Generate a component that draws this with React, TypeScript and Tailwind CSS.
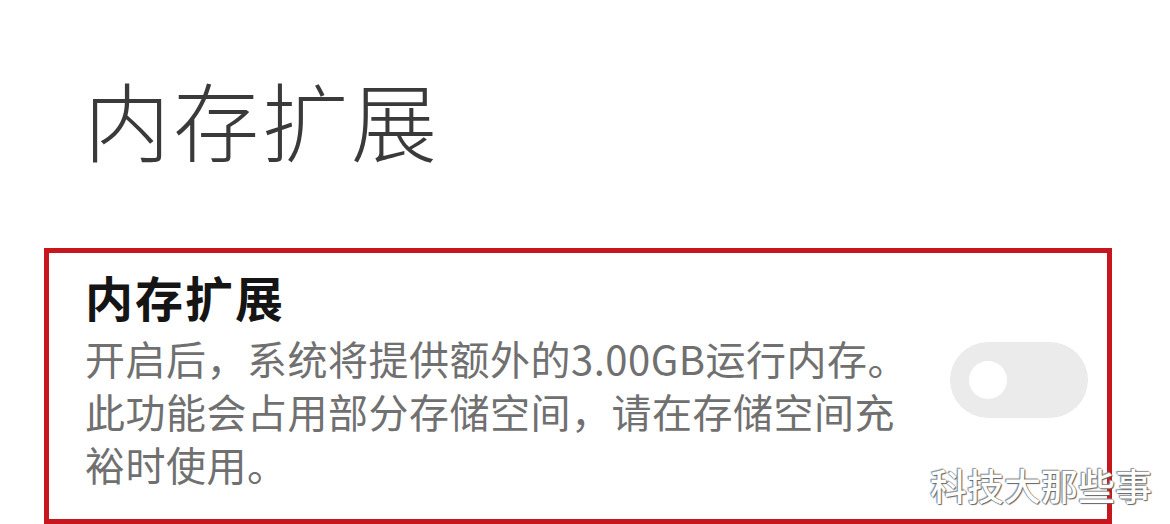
import { useState } from 'react';

const FONT = "font-['Noto_Sans_CJK_SC','Noto_Sans',sans-serif]";

function Toggle({ on, onChange }: { on: boolean; onChange: (v: boolean) => void }) {
  return (
    <button
      onClick={() => onChange(!on)}
      className="w-[138px] h-[76px] rounded-full bg-[#ebebeb] flex items-center px-[19px] shrink-0"
    >
      <span className={on ? 'ml-auto w-[38px] h-[38px] rounded-full bg-white' : 'w-[38px] h-[38px] rounded-full bg-white'} />
    </button>
  );
}

export default function App() {
  const [enabled, setEnabled] = useState(false);

  return (
    <div className={`relative w-[1170px] h-[524px] bg-white overflow-hidden ${FONT}`}>
      {/* Page heading */}
      <h1 className="pt-[76px] pl-[84px] text-[86px] leading-none font-light tracking-[3px] text-[#3a3a3a]">
        内存扩展
      </h1>

      {/* Setting card */}
      <div className="mt-[86px] ml-[44px] w-[1068px] h-[276px] border-[5px] border-[#c8161e] flex items-start">
        <div className="flex-1 pl-[36px] pt-[15px]">
          <div className="text-[48px] leading-[56px] font-bold tracking-[2px] text-[#151515]">内存扩展</div>
          <div className="mt-[8px] text-[40px] leading-[53px] tracking-[0.5px] text-[#707070]">
            <div>开启后，系统将提供额外的3.00GB运行内存。</div>
            <div>此功能会占用部分存储空间，请在存储空间充</div>
            <div>裕时使用。</div>
          </div>
        </div>
        <div className="pt-[89px] pr-[19px]">
          <Toggle on={enabled} onChange={setEnabled} />
        </div>
      </div>

      {/* Watermark */}
      <div className="absolute left-[930px] top-[462px] text-[37px] leading-[46px] font-medium text-white [text-shadow:0_0_1px_#444,1px_1px_1px_#666,-1px_-1px_1px_#999]">
        科技大那些事
      </div>
    </div>
  );
}
